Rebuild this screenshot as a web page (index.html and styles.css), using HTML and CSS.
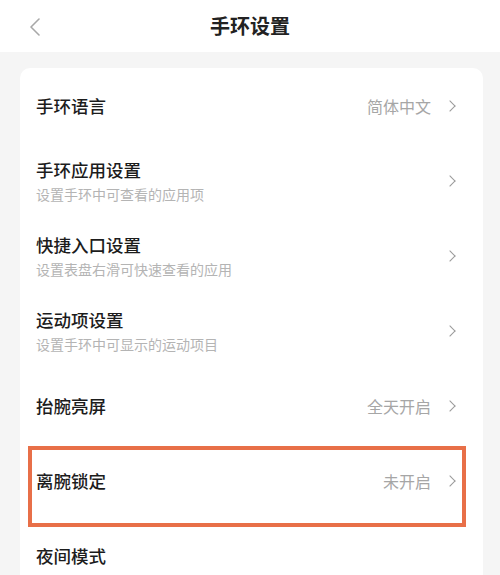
FILE: index.html
```html
<!DOCTYPE html>
<html>
<head>
<meta charset="utf-8">
<meta name="viewport" content="width=device-width, initial-scale=1.0">
<title>手环设置</title>
<link rel="stylesheet" href="styles.css">
</head>
<body>

  <div class="top-bar">
    <svg class="back-icon" width="12" height="18" viewBox="0 0 12 18">
      <path d="M10 1 L2 9 L10 17" fill="none" stroke="#a8a8a8" stroke-width="1.6" stroke-linecap="round" stroke-linejoin="round"/>
    </svg>
    <h1 class="page-title">手环设置</h1>
  </div>

  <div class="settings-card">
    <div class="row">
      <div class="row-text"><div class="row-title">手环语言</div></div>
      <span class="row-value">简体中文</span>
      <span class="chevron"></span>
    </div>
    <div class="row">
      <div class="row-text">
        <div class="row-title">手环应用设置</div>
        <div class="row-sub">设置手环中可查看的应用项</div>
      </div>
      <span class="chevron"></span>
    </div>
    <div class="row">
      <div class="row-text">
        <div class="row-title">快捷入口设置</div>
        <div class="row-sub">设置表盘右滑可快速查看的应用</div>
      </div>
      <span class="chevron"></span>
    </div>
    <div class="row">
      <div class="row-text">
        <div class="row-title">运动项设置</div>
        <div class="row-sub">设置手环中可显示的运动项目</div>
      </div>
      <span class="chevron"></span>
    </div>
    <div class="row">
      <div class="row-text"><div class="row-title">抬腕亮屏</div></div>
      <span class="row-value">全天开启</span>
      <span class="chevron"></span>
    </div>
    <div class="row highlighted">
      <div class="row-text"><div class="row-title">离腕锁定</div></div>
      <span class="row-value">未开启</span>
      <span class="chevron"></span>
    </div>
    <div class="row">
      <div class="row-text"><div class="row-title">夜间模式</div></div>
    </div>
  </div>

</body>
</html>
```

FILE: styles.css
```css
html, body {
  margin: 0;
  padding: 0;
  height: 100%;
  overflow: hidden;
}

body {
  background: #f5f5f5;
  font-family: "Noto Sans CJK SC", "Noto Sans", sans-serif;
  color: #1c1c1c;
}

.top-bar {
  position: relative;
  height: 52px;
  background: #fff;
  display: flex;
  align-items: center;
  justify-content: center;
}

.back-icon {
  position: absolute;
  left: 29px;
  top: 18px;
}

.page-title {
  margin: 0;
  font-size: 20px;
  font-weight: 600;
  color: #222;
  line-height: 1;
}

.settings-card {
  margin: 16px 17px 0 20px;
  background: #fff;
  border-radius: 10px 10px 0 0;
}

.row {
  position: relative;
  height: 75px;
  padding: 0 27px 0 16px;
  display: flex;
  align-items: center;
}

.row-text {
  flex: 1;
}

.row-title {
  font-size: 17.5px;
  font-weight: 500;
  line-height: 22px;
  color: #1c1c1c;
}

.row-sub {
  margin-top: 4px;
  font-size: 14px;
  line-height: 18px;
  color: #b4b4b4;
}

.row-value {
  font-size: 16px;
  color: #a6a6a6;
  margin-right: 15px;
}

.chevron {
  width: 7px;
  height: 7px;
  border-top: 1.6px solid #9a9a9a;
  border-right: 1.6px solid #9a9a9a;
  transform: rotate(45deg);
  margin-right: 2px;
}

.highlighted {
  top: 0;
}

.highlighted::after {
  content: "";
  position: absolute;
  left: 8px;
  right: 17px;
  top: 3px;
  height: 81px;
  box-sizing: border-box;
  border: 4px solid #e86f48;
}
```
